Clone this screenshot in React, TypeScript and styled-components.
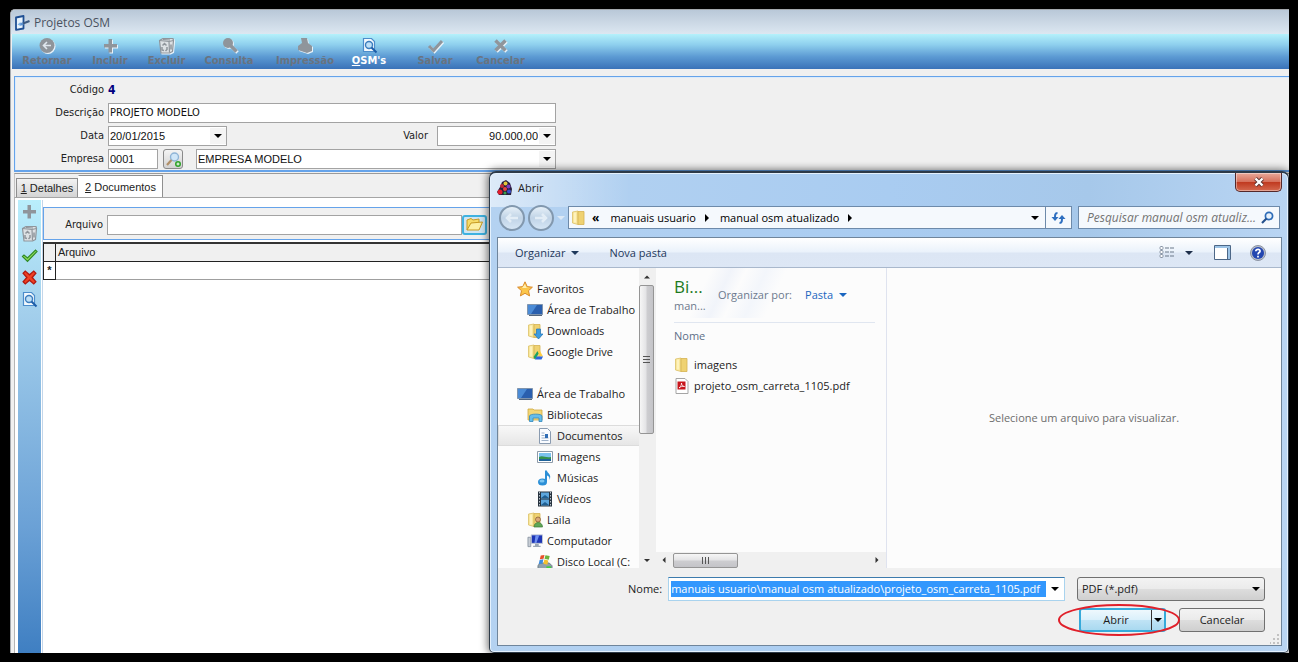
import React, { useEffect, useRef } from "react";
import styled, { createGlobalStyle } from "styled-components";

const GlobalStyle = createGlobalStyle`
  * { box-sizing: border-box; }
  body { margin: 0; background: #000; }
  button, input, select { font: inherit; color: inherit; margin: 0; }
  ul { list-style: none; margin: 0; padding: 0; }
  svg { display: block; flex: none; }
`;

const tahoma = `"DejaVu Sans Condensed", Tahoma, "DejaVu Sans", sans-serif`;
const msSans = `"Liberation Sans", Arial, sans-serif`;
const segoe = `"Open Sans", "Segoe UI", sans-serif`;

/* ---------- main window ---------- */

const Desktop = styled.div`
  position: relative;
  min-height: 100vh;
  display: flex;
  padding: 9px 9px 9px 10px;
  background: #000;
`;

const MainWindow = styled.main`
  flex: 1;
  min-width: 0;
  display: flex;
  flex-direction: column;
  background: #f0f0f0;
  border: 1px solid #a5a9ae;
  border-right: 0;
  border-bottom: 0;
  border-radius: 5px 0 0 0;
  overflow: hidden;
  font: 11px/14px ${tahoma};
  color: #222;
`;

const TitleBar = styled.header`
  display: flex;
  align-items: center;
  gap: 4px;
  height: 24px;
  padding: 1px 3px 0;
  background: linear-gradient(#b9c8d8, #dce7f1);
  font: 12px/16px ${segoe};
  color: #4a5260;
`;

const Toolbar = styled.nav`
  display: flex;
  height: 35px;
  margin-left: 1px;
  padding: 3px 0 0 2px;
  background: linear-gradient(#b4f1fb 0%, #8fd0ee 30%, #5c9ad3 65%, #3a72b8 100%);
`;

const ToolButton = styled.button<{ $w: number; $active?: boolean }>`
  display: flex;
  flex-direction: column;
  align-items: center;
  width: ${(p) => p.$w}px;
  padding: 0;
  border: 0;
  background: none;
  font: bold 11px/14px ${tahoma};
  color: ${(p) => (p.$active ? "#fff" : "#69737f")};
  white-space: nowrap;
  svg { filter: ${(p) => (p.$active ? "none" : "drop-shadow(1px 1px 0 #e8f2fa)")}; }
`;

const FormPanel = styled.form`
  display: flex;
  flex-direction: column;
  gap: 3px;
  margin: 7px 0 0 3px;
  padding: 3px 0 1px;
  border: 1px solid #65a3ea;
  border-right: 0;
  border-bottom-width: 2px;
  box-shadow: inset 1px 1px 0 #dcebfb;
`;

const FormRow = styled.div`
  display: flex;
  align-items: center;
  height: 20px;
`;

const FieldLabel = styled.label<{ $w: number; $gap?: number }>`
  width: ${(p) => p.$w}px;
  margin-right: ${(p) => p.$gap ?? 4}px;
  text-align: right;
`;

const Code = styled.output`
  font-size: 12px;
  font-weight: bold;
  color: #000080;
`;

const Field = styled.div<{ $w: number; $left?: number; $font?: string }>`
  display: flex;
  align-items: center;
  width: ${(p) => p.$w}px;
  height: 20px;
  margin-left: ${(p) => p.$left ?? 0}px;
  border: 1px solid #a3a3a3;
  background: #fff;
  font: 11px/16px ${(p) => p.$font ?? msSans};
  color: #111;
`;

const FieldInput = styled.input<{ $right?: boolean }>`
  flex: 1;
  min-width: 0;
  height: 16px;
  padding: 0 1px;
  border: 0;
  outline: 0;
  background: transparent;
  text-align: ${(p) => (p.$right ? "right" : "left")};
`;

const FieldSelect = styled.select`
  flex: 1;
  min-width: 0;
  width: 0;
  height: 16px;
  padding: 0 1px;
  border: 0;
  outline: 0;
  appearance: none;
  background: transparent;
`;

const ArrowButton = styled.button`
  display: flex;
  align-items: center;
  justify-content: center;
  width: 16px;
  height: 16px;
  padding: 0;
  border: 0;
  background: #f4f4f4;
`;

const LookupButton = styled.button`
  display: flex;
  align-items: center;
  justify-content: center;
  width: 20px;
  height: 20px;
  margin-left: 5px;
  padding: 0;
  border: 1px solid #8a8a8a;
  border-radius: 3px;
  background: linear-gradient(#f4f4f4, #d2d2d2);
`;

const Tabs = styled.div`
  display: flex;
  align-items: flex-end;
  height: 24px;
  margin: 1px 0 0 3px;
  padding-left: 1px;
  border-top: 1px solid #9a9a9a;
  border-left: 1px solid #c4c4c4;
  font: 11px/14px ${msSans};
`;

const Tab = styled.button<{ $w: number; $selected?: boolean }>`
  width: ${(p) => p.$w}px;
  height: ${(p) => (p.$selected ? 22 : 19)}px;
  padding: 0;
  border: 1px solid #8f8f8f;
  border-left-color: ${(p) => (p.$selected ? "#fff" : "#8f8f8f")};
  border-bottom: 0;
  background: ${(p) => (p.$selected ? "#fff" : "linear-gradient(#f2f2f2, #d4d4d4)")};
  white-space: nowrap;
`;

const TabPage = styled.section`
  flex: 1;
  display: flex;
  margin-left: 3px;
  padding: 2px 0 0 3px;
  border-top: 1px solid #a5a5a5;
  border-left: 1px solid #b5b5b5;
  background: #fff;
`;

const SideTools = styled.nav`
  display: flex;
  flex-direction: column;
  align-items: center;
  gap: 5px;
  width: 23px;
  padding-top: 3px;
  background: linear-gradient(#b9eefc 0%, #a3cfec 25%, #6ba1d6 72%, #3f7fc2 100%);
`;

const SideButton = styled.button`
  display: flex;
  padding: 0;
  border: 0;
  background: none;
`;

const Documents = styled.div`
  flex: 1;
  min-width: 0;
  margin-left: 1px;
  padding-top: 7px;
  border-left: 1px solid #c3d6ea;
`;

const FilePanel = styled.div`
  display: flex;
  align-items: center;
  height: 33px;
  padding-top: 2px;
  border: 1px solid #65a3ea;
  border-right: 0;
  background: #f0f0f0;
`;

const FolderButton = styled.button`
  display: flex;
  align-items: center;
  justify-content: center;
  width: 25px;
  height: 20px;
  padding: 0;
  border: 2px solid #3fb2e0;
  border-radius: 3px;
  background: #cfe6f3;
`;

const Grid = styled.table`
  width: 100%;
  margin-top: 2px;
  border-collapse: collapse;
  border-top: 2px solid #333;
  font: 11px/14px ${msSans};
  tr { height: 18px; }
  th { border: 1px solid #222; background: #f0f0f0; font-weight: normal; text-align: left; padding: 0 2px; }
  td { border-bottom: 1px solid #9f9f9f; padding: 0 2px; }
  th:first-child, td:first-child { width: 12px; padding: 0; border: 1px solid #222; text-align: center; font-weight: bold; }
`;

/* ---------- file dialog ---------- */

const Dialog = styled.section`
  position: absolute;
  top: 171px;
  left: 489px;
  right: 9px;
  padding: 0 6px 6px 7px;
  border: 1px solid #2d3a48;
  border-top-width: 2px;
  border-radius: 7px 7px 5px 5px;
  background:
    linear-gradient(90deg, rgba(255,255,255,0.55), rgba(255,255,255,0) 140px) no-repeat 0 0 / 100% 34px,
    linear-gradient(90deg, #b4d2f1, #a9ccf1 50%, #a6c8ea 75%, #b9d5f3);
  box-shadow: inset 0 0 0 1px #e4f1fd, 0 0 8px 1px rgba(0,0,0,0.6);
  font: 11px/16px ${segoe};
  color: #1c1c1c;
`;

const DialogTitle = styled.header`
  display: flex;
  align-items: center;
  gap: 5px;
  height: 29px;
`;

const CloseButton = styled.button`
  align-self: flex-start;
  display: flex;
  align-items: center;
  justify-content: center;
  width: 47px;
  height: 19px;
  margin-left: auto;
  padding: 0;
  border: 1px solid #54282a;
  border-top: 0;
  border-radius: 0 0 5px 5px;
  background: linear-gradient(#e9a99a 0%, #d6715c 48%, #c03a20 52%, #d4694f 100%);
  box-shadow: inset 0 0 0 1px rgba(255,255,255,0.4);
`;

const AddressRow = styled.div`
  display: flex;
  align-items: center;
  height: 35px;
  padding: 0 2px 4px;
`;

const NavButtons = styled.div`
  display: flex;
  align-items: center;
  width: 69px;
  gap: 3px;
`;

const NavButton = styled.button`
  display: flex;
  align-items: center;
  justify-content: center;
  width: 26px;
  height: 26px;
  padding: 0;
  border: 2px solid #8298ae;
  border-radius: 50%;
  background: linear-gradient(#e6f0f8, #c0d3e6 50%, #d6e6f5);
`;

const AddressBar = styled.div`
  flex: 1;
  display: flex;
  align-items: center;
  height: 23px;
  padding-left: 2px;
  border: 1px solid #6d8aaa;
  background: #f5f9fd;
  color: #000;
`;

const Crumb = styled.button`
  padding: 0;
  border: 0;
  background: none;
  margin: 0 9px 0 11px;
  white-space: nowrap;
`;

const CrumbOverflow = styled(Crumb)`
  margin: 0 0 0 5px;
  font-size: 12px;
  font-weight: bold;
`;

const Spacer = styled.span`
  flex: 1;
`;

const RefreshButton = styled.button`
  display: flex;
  align-items: center;
  justify-content: center;
  width: 26px;
  height: 21px;
  padding: 0;
  border: 0;
  border-left: 1px solid #6d8aaa;
  background: none;
`;

const PlainButton = styled.button<{ $w?: number }>`
  display: flex;
  align-items: center;
  justify-content: center;
  gap: 6px;
  width: ${(p) => (p.$w ? p.$w + "px" : "auto")};
  padding: 0;
  border: 0;
  background: none;
  white-space: nowrap;
`;

const SearchBox = styled.div`
  display: flex;
  align-items: center;
  width: 202px;
  height: 23px;
  margin-left: 6px;
  padding: 0 5px 0 8px;
  border: 1px solid #6d8aaa;
  background: #f5f9fd;
`;

const SearchInput = styled.input`
  flex: 1;
  min-width: 0;
  padding: 0;
  border: 0;
  outline: 0;
  background: none;
  font-size: 12px;
  font-style: italic;
  &::placeholder { color: #737373; opacity: 1; }
`;

const Client = styled.div`
  border: 1px solid #6f859b;
  background: #f0f0f0;
`;

const CommandBar = styled.div`
  display: flex;
  align-items: center;
  height: 30px;
  padding: 0 7px 0 17px;
  border-bottom: 1px solid #a9b8cc;
  background: linear-gradient(#fff 0%, #eaf2fb 48%, #dce6f4 52%, #dde7f5 100%);
  color: #1e395b;
`;

const Commands = styled.div`
  flex: 1;
  display: flex;
  gap: 30px;
`;

const CommandIcons = styled.div`
  display: flex;
  align-items: center;
`;

const Panes = styled.div`
  display: flex;
  height: 300px;
  background: #fcfcfc;
`;

const Tree = styled.ul`
  width: 141px;
  padding-top: 10px;
  overflow: hidden;
`;

const TreeItem = styled.li<{ $level: number; $selected?: boolean; $spaced?: boolean }>`
  display: flex;
  align-items: center;
  gap: 4px;
  height: 21px;
  margin-top: ${(p) => (p.$spaced ? 21 : 0)}px;
  padding-left: ${(p) => 18 + p.$level * 10}px;
  border: 1px solid ${(p) => (p.$selected ? "#dcdcdc" : "transparent")};
  border-right: 0;
  background: ${(p) => (p.$selected ? "linear-gradient(#f8f8f8, #e6e6e6)" : "none")};
  white-space: nowrap;
`;

const VScroll = styled.div`
  display: flex;
  flex-direction: column;
  align-items: center;
  width: 15px;
  padding: 7px 0 6px;
  background: #f0f0f0;
`;

const VThumb = styled.div`
  display: flex;
  align-items: center;
  justify-content: center;
  width: 15px;
  height: 149px;
  margin: 6px 0 auto;
  border: 1px solid #959595;
  border-radius: 2px;
  background: linear-gradient(90deg, #f6f6f6, #e4e4e6 45%, #cdcdd0 55%, #c4c4c8);
`;

const Files = styled.div`
  display: flex;
  flex-direction: column;
  width: 233px;
  border-left: 2px solid #f0f0f0;
  border-right: 1px solid #dfe3ef;
`;

const FilesBody = styled.div`
  flex: 1;
  padding: 8px 11px 0 18px;
  background: linear-gradient(115deg, #fcfcfc 22%, #f1f4fa 30%, #fcfcfc 36%, #f3f6fb 44%, #fcfcfc 52%) no-repeat 0 0 / 100% 50px;
`;

const LibraryHead = styled.div`
  display: flex;
  gap: 13px;
  height: 47px;
  border-bottom: 1px solid #e0e6f0;
  color: #6d7a8e;
`;

const LibraryName = styled.div`
  width: 31px;
  white-space: nowrap;
`;

const LibraryTitle = styled.h2`
  margin: 0;
  font: 17px/22px ${segoe};
  color: #1d7a1d;
`;

const Arrange = styled.div`
  display: flex;
  align-items: center;
  gap: 13px;
  height: 38px;
  white-space: nowrap;
`;

const PastaButton = styled(PlainButton)`
  color: #1a66c0;
`;

const ColumnHead = styled.div`
  height: 31px;
  padding: 5px 0;
  color: #5d6f88;
`;

const FileItem = styled.li`
  display: flex;
  align-items: center;
  gap: 4px;
  height: 21px;
  white-space: nowrap;
`;

const HScroll = styled.div`
  display: flex;
  align-items: center;
  height: 16px;
  padding: 0 7px 0 6px;
  background: #f0f0f0;
`;

const HThumb = styled.div`
  display: flex;
  align-items: center;
  justify-content: center;
  width: 65px;
  height: 15px;
  margin: 0 auto 0 7px;
  border: 1px solid #959595;
  border-radius: 2px;
  background: linear-gradient(#f6f6f6, #e4e4e6 45%, #cdcdd0 55%, #c4c4c8);
`;

const Preview = styled.div`
  flex: 1;
  display: flex;
  align-items: center;
  justify-content: center;
  color: #6d6d6d;
`;

const Footer = styled.footer`
  display: flex;
  flex-direction: column;
  gap: 7px;
  padding: 9px 16px 13px;
`;

const FooterRow = styled.div<{ $end?: boolean }>`
  display: flex;
  align-items: center;
  justify-content: ${(p) => (p.$end ? "flex-end" : "flex-start")};
  gap: ${(p) => (p.$end ? 13 : 12)}px;
`;

const NameField = styled.div`
  flex: 1;
  display: flex;
  align-items: center;
  justify-content: flex-end;
  gap: 6px;
  padding-left: 114px;
`;

const NameBox = styled.div`
  flex: 1;
  display: flex;
  align-items: center;
  height: 24px;
  padding-left: 2px;
  border: 1px solid #a9d3ee;
  border-top-color: #3d7bad;
  background: #fff;
`;

const NameInput = styled.input`
  flex: 1;
  min-width: 0;
  height: 16px;
  padding: 0;
  border: 0;
  outline: 0;
  background: #3297fd;
  color: #fff;
`;

const TypeBox = styled.div`
  display: flex;
  align-items: center;
  width: 188px;
  height: 24px;
  padding: 0 4px 0 3px;
  border: 1px solid #707070;
  border-radius: 3px;
  background: linear-gradient(#f3f3f3 0%, #ebebeb 48%, #dddddd 52%, #cfcfcf 100%);
`;

const OpenSplit = styled.div`
  position: relative;
  display: flex;
  width: 87px;
  height: 24px;
  border: 2px solid #36aada;
  border-radius: 3px;
  background: linear-gradient(#eef8fd 0%, #daf0fb 48%, #bfe3f5 52%, #a9d9f0 100%);
`;

const OpenButton = styled.button`
  flex: 1;
  padding: 0;
  border: 0;
  border-right: 1px solid #333;
  background: none;
`;

const HighlightRing = styled.svg`
  position: absolute;
  left: -24px;
  top: -7px;
  pointer-events: none;
`;

const CancelButton = styled.button`
  width: 86px;
  height: 24px;
  padding: 0;
  border: 1px solid #707070;
  border-radius: 3px;
  background: linear-gradient(#f3f3f3 0%, #ebebeb 48%, #dddddd 52%, #cfcfcf 100%);
`;

const Grip = styled.svg`
  position: absolute;
  right: 8px;
  bottom: 8px;
`;

/* ---------- icons ---------- */

const Down = ({ color = "#000", w = 8 }: { color?: string; w?: number }) => (
  <svg width={w} height={w / 2} viewBox="0 0 8 4"><path d="M0 0h8L4 4z" fill={color} /></svg>
);
const Up = () => <svg width="6" height="4" viewBox="0 0 8 4"><path d="M0 4h8L4 0z" fill="#333" /></svg>;
const Right = () => <svg width="4" height="8" viewBox="0 0 4 8"><path d="M0 0v8l4-4z" fill="#000" /></svg>;
const Left = () => <svg width="4" height="6" viewBox="0 0 4 8"><path d="M4 0v8L0 4z" fill="#333" /></svg>;

const AppIcon = () => (
  <svg width="16" height="16" viewBox="0 0 16 16">
    <path d="M2 2.500 9.500 1v12.500L2 14.800z" fill="#e8f3fc" stroke="#1f4f93" strokeWidth="1.800" strokeLinejoin="round" />
    <path d="m6 9.500 3.500-1" stroke="#5a8fce" strokeWidth="2.500" />
    <path d="M9 8.500 15.500 6" stroke="#3d5a80" strokeWidth="2.200" />
    <path d="m3.500 9.500 3-2.500v4z" fill="#7fb2e6" />
  </svg>
);

const g = "#8f959b";
const BackIcon = () => (
  <svg width="18" height="17" viewBox="0 0 18 17">
    <circle cx="9" cy="8.500" r="7.500" fill={g} />
    <path d="M13 8.500H5.500M9 5 5.500 8.500 9 12" stroke="#dfe7ee" strokeWidth="1.600" fill="none" />
  </svg>
);
const PlusIcon = () => (
  <svg width="17" height="17" viewBox="0 0 17 17"><path d="M6.500 2h3.500v5H15v3.500h-5v5H6.500v-5H2V7h4.500z" fill={g} /></svg>
);
const TrashIcon = () => (
  <svg width="17" height="17" viewBox="0 0 17 17">
    <path d="M1.500 3.500 5 1.500h10l.5 2-1 11-3 1.500H3z" fill="#dde1e4" stroke={g} strokeWidth="1.200" strokeLinejoin="round" />
    <path d="M1.500 3.500 11 4.500l4.500-1M11 4.500l.5 11M5 2.500l7 .5" stroke={g} strokeWidth="1.200" fill="none" />
    <path d="M4.500 8.500 6.500 6.500l2 2M4 10v3l2 .5M9 10v2.500L7.500 14M13 7.500v5" stroke={g} strokeWidth="1.500" fill="none" />
  </svg>
);
const SearchGray = () => (
  <svg width="17" height="17" viewBox="0 0 17 17">
    <circle cx="7" cy="6" r="5" fill={g} /><path d="m10 9 5.500 5.500" stroke={g} strokeWidth="3.500" />
  </svg>
);
const PrintGray = () => (
  <svg width="18" height="17" viewBox="0 0 18 17">
    <path d="M5 1h6l1 5 4 3v5l-5 2-9-3V9l4-3z" fill={g} />
  </svg>
);
const CheckGray = () => (
  <svg width="17" height="17" viewBox="0 0 17 17"><path d="m2 9 4.500 4.500L15 4" stroke={g} strokeWidth="3" fill="none" /></svg>
);
const CrossGray = () => (
  <svg width="17" height="17" viewBox="0 0 17 17"><path d="m3.500 3.500 10 10m0-10-10 10" stroke={g} strokeWidth="3.500" /></svg>
);
const PageSearch = () => (
  <svg width="17" height="17" viewBox="0 0 17 17">
    <path d="M2.500 1.500h8l3 3v10h-11z" fill="#f2f8fd" stroke="#4c8dcb" strokeWidth="1.200" />
    <circle cx="8" cy="8" r="3.500" fill="#bfe0f7" stroke="#3c7dbd" strokeWidth="1.400" />
    <path d="m10.500 10.500 5 5" stroke="#1d5da8" strokeWidth="2" />
  </svg>
);
const CheckGreen = () => (
  <svg width="17" height="17" viewBox="0 0 17 17">
    <path d="m1.500 9.500 1.500-1.500 3.500 3 8-8 1.500 1.500-9.500 10z" fill="#8fdc5a" stroke="#2f8a27" strokeWidth="1.200" />
  </svg>
);
const CrossRed = () => (
  <svg width="17" height="17" viewBox="0 0 16 16">
    <path d="m2 4 2-2 4 3.500L12 2l2 2-3.500 4 3.500 4-2 2-4-3.500L4 14l-2-2 3.500-4z" fill="#f04023" stroke="#b01810" strokeWidth="1.200" />
  </svg>
);
const LookupIcon = () => (
  <svg width="17" height="17" viewBox="0 0 17 17">
    <circle cx="9.500" cy="6" r="4" fill="#cfe6f8" stroke="#8fb4d6" strokeWidth="1.400" />
    <path d="M6.500 9 2 14" stroke="#b08f68" strokeWidth="2.200" />
    <circle cx="13" cy="13" r="3" fill="#2fa32a" /><path d="M11.500 13h3M13 11.500v3" stroke="#fff" />
  </svg>
);
const OpenFolder = () => (
  <svg width="19" height="15" viewBox="0 0 19 15">
    <path d="M2 13V3l4-1.500 2 1.500 6-1v4" fill="#f6dc6a" stroke="#c79a22" />
    <path d="m2 13 4-7 11.500-1-3.500 8z" fill="#fdf0a4" stroke="#c79a22" />
  </svg>
);
const FlowerIcon = () => (
  <svg width="16" height="16" viewBox="0 0 16 16">
    <path d="M5 2 9 0l4 3 2 6-1 6H2l-2-3 3-5z" fill="#27203c" />
    <circle cx="8.500" cy="3.500" r="2" fill="#e4c93a" /><circle cx="5" cy="6" r="2" fill="#c22b38" />
    <circle cx="11.500" cy="6.500" r="2" fill="#7b3bc0" /><circle cx="8" cy="9" r="2" fill="#e84040" />
    <circle cx="3" cy="12" r="2.500" fill="#e01d2c" /><circle cx="12" cy="11.500" r="2" fill="#3a4fd0" />
    <circle cx="8" cy="13" r="1.500" fill="#39a04a" />
  </svg>
);
const CloseX = () => (
  <svg width="12" height="10" viewBox="0 0 12 10">
    <path d="m2.500 1.500 7 7m0-7-7 7" stroke="#5b3230" strokeWidth="4" />
    <path d="m2.500 1.500 7 7m0-7-7 7" stroke="#fff" strokeWidth="2.400" />
  </svg>
);
const NavArrow = ({ flip }: { flip?: boolean }) => (
  <svg width="14" height="12" viewBox="0 0 14 12">
    <path d={flip ? "M1 6h11M8 2l4 4-4 4" : "M13 6H2M6 2 2 6l4 4"} stroke="#e3edf6" strokeWidth="2.500" fill="none" />
  </svg>
);
const RefreshIcon = () => (
  <svg width="15" height="14" viewBox="0 0 15 14">
    <path d="M6.500 2C4 2 4 4 4 7M8.500 12c2.500 0 2.500-2 2.500-5" stroke="#2e6fc0" strokeWidth="2" fill="none" />
    <path d="M.500 6h7L4 10zM7.500 8h7L11 4z" fill="#2e6fc0" />
  </svg>
);
const MagnifierIcon = () => (
  <svg width="13" height="13" viewBox="0 0 13 13">
    <circle cx="8" cy="5" r="3.600" fill="#e7f1fb" stroke="#2d6cb8" strokeWidth="1.700" />
    <path d="M5.500 7.500 1 12" stroke="#24508c" strokeWidth="2.200" />
  </svg>
);
const ViewIcon = () => (
  <svg width="16" height="13" viewBox="0 0 16 13">
    {[1, 5, 9].map((y) => (
      <g key={y}>
        <rect x="1" y={y - 0.5} width="3" height="3" rx="1" fill="#fff" stroke="#8894a5" />
        <path d={`M6 ${y + 1}h4M11 ${y + 1}h4`} stroke="#6b7889" />
      </g>
    ))}
  </svg>
);
const PaneIcon = () => (
  <svg width="17" height="15" viewBox="0 0 17 15">
    <path d="M.5.5h16v14H.5z" fill="#fff" stroke="#4c6787" /><path d="M1 1h15v2H1zM13.500 3H16v11h-2.500z" fill="#9cc3e6" />
    <path d="M13.500 3v11" stroke="#4c6787" />
  </svg>
);
const HelpIcon = () => (
  <svg width="16" height="16" viewBox="0 0 16 16">
    <circle cx="8" cy="8" r="7.500" fill="#b9bfcb" stroke="#8b93a3" /><circle cx="8" cy="8" r="6" fill="#2346b0" />
    <path d="M5.800 6.300C6 3.600 10.400 3.800 10 6.300 9.800 7.600 8 7.600 8 9.400M8 10.700v1.800" stroke="#fff" strokeWidth="1.700" fill="none" />
  </svg>
);
const StarIcon = () => (
  <svg width="16" height="16" viewBox="0 0 16 16">
    <path d="m8 .8 2.200 4.800 5.200.6-3.900 3.500 1.100 5.200L8 12.300l-4.600 2.600 1.100-5.200L.6 6.200l5.200-.6z" fill="#fbc64a" stroke="#d98a2b" />
    <path d="m8 3 1.400 3.500 3 .5H5z" fill="#fff0b0" />
  </svg>
);
const MonitorIcon = () => (
  <svg width="16" height="16" viewBox="0 0 16 16">
    <path d="M.5 2.500h15v10H.5z" fill="#2a5fae" stroke="#7f94ad" /><path d="M1 3h9L4 12H1z" fill="#4b8bd6" />
    <path d="M2 13.500h13" stroke="#53657c" />
  </svg>
);
const FolderBase = () => (
  <>
    <path d="M1.500 2 7 1v13.500L1.500 13z" fill="#f9e79c" stroke="#dcc067" strokeWidth=".8" />
    <path d="M7 1.500h6V14.500H7z" fill="#efd272" stroke="#d5b352" strokeWidth=".8" />
    <path d="M4 2.500v10" stroke="#fff6c8" strokeWidth="1.500" />
  </>
);
const FolderIcon = () => <svg width="16" height="16" viewBox="0 0 16 16"><FolderBase /></svg>;
const DownloadsIcon = () => (
  <svg width="16" height="16" viewBox="0 0 16 16"><FolderBase /><path d="M9.500 6h4v5H16l-4.500 5L7 11h2.500z" fill="#3d9be0" stroke="#2173b8" strokeWidth=".7" /></svg>
);
const DriveIcon = () => (
  <svg width="16" height="16" viewBox="0 0 16 16"><FolderBase />
    <path d="m10.500 7-4 6 1.500 2.500 4-6.500z" fill="#1da362" /><path d="M10.500 7H13l3 5.500h-3z" fill="#ffce44" /><path d="M9.500 12.500H16l-1.500 3H8z" fill="#2b66e0" />
  </svg>
);
const LibraryIcon = () => (
  <svg width="16" height="16" viewBox="0 0 16 16">
    <path d="M1 2h5l1 1h8v10H1z" fill="#f2d676" stroke="#cfa941" strokeWidth=".8" />
    <path d="M2.500 14.500V9C2.500 6.500 15 6.500 15 9v5.500h-3V11H6v3.500z" fill="#66bdea" stroke="#3188bd" strokeWidth=".8" />
  </svg>
);
const DocIcon = () => (
  <svg width="16" height="16" viewBox="0 0 16 16">
    <path d="M2.500.5h8l3 3v12h-11z" fill="#fafcff" stroke="#8a9bb0" /><path d="M4.500 5h3M4.500 7.500h3M4.500 10h7M4.500 12.500h7" stroke="#9fb2ca" />
    <path d="M8 6h3v4H8z" fill="#2f6db5" />
  </svg>
);
const ImageIcon = () => (
  <svg width="16" height="16" viewBox="0 0 16 16">
    <path d="M.5 2.500h15v11H.5z" fill="#fff" stroke="#8d9aa8" /><path d="M2 4h12v8H2z" fill="#7cc2ee" />
    <path d="M2 8c4-2 6 1 12 0v2H2z" fill="#35924d" /><path d="M2 10h12v2H2z" fill="#1e6299" />
  </svg>
);
const MusicIcon = () => (
  <svg width="16" height="16" viewBox="0 0 16 16">
    <ellipse cx="5.500" cy="12" rx="4.500" ry="3.500" fill="#2c8fd6" /><ellipse cx="5" cy="11" rx="2.500" ry="1.500" fill="#7cc6f2" />
    <path d="M8 12V.500h1.800C10.500 3.500 15 4.500 12.500 10c.3-3-1-4-2.500-4.500V12z" fill="#2c8fd6" />
  </svg>
);
const VideoIcon = () => (
  <svg width="16" height="16" viewBox="0 0 16 16">
    <path d="M1 .5h14v15H1z" fill="#27333f" /><path d="M4 1.500h8v6H4zM4 8.500h8v6H4z" fill="#5da6dc" />
    <path d="M2.500 1v14M13.500 1v14" stroke="#b9c3cc" strokeWidth="1" strokeDasharray="1.500 1.500" /><path d="m4 7 4-3 4 3M4 14l4-3 4 3" fill="#1f5f92" />
  </svg>
);
const UserIcon = () => (
  <svg width="16" height="16" viewBox="0 0 16 16"><FolderBase />
    <circle cx="11" cy="7.500" r="2.500" fill="#d9a878" stroke="#80552f" strokeWidth=".7" /><path d="M7 15c0-6 8.500-6 8.500 0z" fill="#5fa857" stroke="#3b7a38" strokeWidth=".7" />
  </svg>
);
const ComputerIcon = () => (
  <svg width="16" height="16" viewBox="0 0 17 16">
    <path d="M1 4h3v10H1z" fill="#c8ced6" stroke="#7f8b99" strokeWidth=".8" /><path d="M4.500 1.500h12v9h-12z" fill="#1d35b5" stroke="#c3cbd6" />
    <path d="M9 2h4l-3 8H8z" fill="#6f8ff0" /><path d="M8.500 11h4v2h2v1.500H6.500V13h2z" fill="#9aa6b5" />
  </svg>
);
const DiskIcon = () => (
  <svg width="16" height="16" viewBox="0 0 17 16">
    <path d="m1 12 2-3h10l3 3v3.500H1z" fill="#8fa0ac" stroke="#5f6e78" strokeWidth=".8" /><path d="M10 13.500h5" stroke="#3fd03f" strokeWidth="1.800" />
    <path d="m4 1 4-.5L7 4.500 3 5z" fill="#e8502c" /><path d="m9 .8 4.500.7-1 4-4.500-1z" fill="#6cb33e" />
    <path d="m2.800 6 4-.8-1 4.500-4 .5z" fill="#3a8be0" /><path d="m7.800 5.300 4.200 1-1 4.500-4.200-1z" fill="#f5c02c" />
  </svg>
);
const PdfIcon = () => (
  <svg width="16" height="16" viewBox="0 0 16 16">
    <path d="M2 .5h9l3 3v12H2z" fill="#fff" stroke="#a5a5a5" /><path d="M3.500 3.500h8v8h-8z" fill="#c8161d" />
    <path d="M5 10c2-1.500 2.500-3.500 2.500-5 0 2 1.500 3.500 3 3.500C8.500 8 7 8.500 5 10" stroke="#fff" strokeWidth=".8" fill="none" />
  </svg>
);

/* ---------- data ---------- */

type Tool = { label: React.ReactNode; icon: React.ReactNode; w: number; active?: boolean };
const tools: Tool[] = [
  { label: "Retornar", icon: <BackIcon />, w: 66 },
  { label: "Incluir", icon: <PlusIcon />, w: 60 },
  { label: "Excluir", icon: <TrashIcon />, w: 53 },
  { label: "Consulta", icon: <SearchGray />, w: 72 },
  { label: "Impressão", icon: <PrintGray />, w: 80 },
  { label: <><u>O</u>SM's</>, icon: <PageSearch />, w: 48, active: true },
  { label: "Salvar", icon: <CheckGray />, w: 84 },
  { label: "Cancelar", icon: <CrossGray />, w: 47 },
];

const places = [
  { label: "Favoritos", icon: <StarIcon />, level: 0 },
  { label: "Área de Trabalho", icon: <MonitorIcon />, level: 1 },
  { label: "Downloads", icon: <DownloadsIcon />, level: 1 },
  { label: "Google Drive", icon: <DriveIcon />, level: 1 },
  { label: "Área de Trabalho", icon: <MonitorIcon />, level: 0, spaced: true },
  { label: "Bibliotecas", icon: <LibraryIcon />, level: 1 },
  { label: "Documentos", icon: <DocIcon />, level: 2, selected: true },
  { label: "Imagens", icon: <ImageIcon />, level: 2 },
  { label: "Músicas", icon: <MusicIcon />, level: 2 },
  { label: "Vídeos", icon: <VideoIcon />, level: 2 },
  { label: "Laila", icon: <UserIcon />, level: 1 },
  { label: "Computador", icon: <ComputerIcon />, level: 1 },
  { label: "Disco Local (C:", icon: <DiskIcon />, level: 2 },
];

const FileDialog = () => {
  const nameRef = useRef<HTMLInputElement>(null);
  // Keep the end of a long path in view.
  useEffect(() => {
    if (nameRef.current) nameRef.current.scrollLeft = nameRef.current.scrollWidth;
  }, []);
  return (
    <Dialog role="dialog" aria-labelledby="dialog-title">
      <DialogTitle>
        <FlowerIcon />
        <span id="dialog-title">Abrir</span>
        <CloseButton aria-label="Fechar"><CloseX /></CloseButton>
      </DialogTitle>
      <AddressRow>
        <NavButtons>
          <NavButton aria-label="Voltar"><NavArrow /></NavButton>
          <NavButton aria-label="Avançar"><NavArrow flip /></NavButton>
          <Down color="#dce9f6" />
        </NavButtons>
        <AddressBar>
          <FolderIcon />
          <CrumbOverflow>«</CrumbOverflow>
          <Crumb>manuais usuario</Crumb>
          <Right />
          <Crumb>manual osm atualizado</Crumb>
          <Right />
          <Spacer />
          <PlainButton $w={20} aria-label="Locais anteriores"><Down /></PlainButton>
          <RefreshButton aria-label="Atualizar"><RefreshIcon /></RefreshButton>
        </AddressBar>
        <SearchBox>
          <SearchInput aria-label="Pesquisar" placeholder="Pesquisar manual osm atualiz..." />
          <MagnifierIcon />
        </SearchBox>
      </AddressRow>
      <Client>
        <CommandBar>
          <Commands>
            <PlainButton>Organizar <Down color="#1e395b" /></PlainButton>
            <PlainButton>Nova pasta</PlainButton>
          </Commands>
          <CommandIcons>
            <PlainButton $w={16} aria-label="Modo de exibição"><ViewIcon /></PlainButton>
            <PlainButton $w={28} aria-label="Mais opções"><Down color="#1e2f4b" /></PlainButton>
            <PlainButton $w={39} aria-label="Painel de visualização"><PaneIcon /></PlainButton>
            <PlainButton $w={32} aria-label="Ajuda"><HelpIcon /></PlainButton>
          </CommandIcons>
        </CommandBar>
        <Panes>
          <Tree>
            {places.map((p, i) => (
              <TreeItem key={i} $level={p.level} $selected={p.selected} $spaced={p.spaced}>{p.icon}{p.label}</TreeItem>
            ))}
          </Tree>
          <VScroll>
            <Up />
            <VThumb><svg width="7" height="8" viewBox="0 0 7 8"><path d="M0 .5h7M0 3.500h7M0 6.500h7" stroke="#555" /></svg></VThumb>
            <Down color="#333" w={6} />
          </VScroll>
          <Files>
            <FilesBody>
              <LibraryHead>
                <LibraryName><LibraryTitle>Bi...</LibraryTitle>man...</LibraryName>
                <Arrange>Organizar por: <PastaButton>Pasta <Down color="#1a66c0" /></PastaButton></Arrange>
              </LibraryHead>
              <ColumnHead>Nome</ColumnHead>
              <ul>
                <FileItem><FolderIcon />imagens</FileItem>
                <FileItem><PdfIcon />projeto_osm_carreta_1105.pdf</FileItem>
              </ul>
            </FilesBody>
            <HScroll>
              <Left />
              <HThumb><svg width="8" height="7" viewBox="0 0 8 7"><path d="M.5 0v7M3.500 0v7M6.500 0v7" stroke="#555" /></svg></HThumb>
              <svg width="4" height="6" viewBox="0 0 4 8"><path d="M0 0v8l4-4z" fill="#333" /></svg>
            </HScroll>
          </Files>
          <Preview>Selecione um arquivo para visualizar.</Preview>
        </Panes>
        <Footer>
          <FooterRow>
            <NameField>
              <label htmlFor="file-name">Nome:</label>
              <NameBox>
                <NameInput id="file-name" ref={nameRef} defaultValue="manuais usuario\manual osm atualizado\projeto_osm_carreta_1105.pdf" />
                <PlainButton $w={18} aria-label="Nomes recentes"><Down /></PlainButton>
              </NameBox>
            </NameField>
            <TypeBox>
              <FieldSelect aria-label="Tipo de arquivo"><option>PDF (*.pdf)</option></FieldSelect>
              <Down />
            </TypeBox>
          </FooterRow>
          <FooterRow $end>
            <OpenSplit>
              <OpenButton>Abrir</OpenButton>
              <PlainButton $w={12} aria-label="Opções de abertura"><Down /></PlainButton>
              <HighlightRing width="124" height="34" viewBox="0 0 124 34">
                <ellipse cx="62" cy="17" rx="60" ry="15" fill="none" stroke="#e0202a" strokeWidth="2" />
              </HighlightRing>
            </OpenSplit>
            <CancelButton>Cancelar</CancelButton>
          </FooterRow>
        </Footer>
      </Client>
      <Grip width="10" height="10" viewBox="0 0 10 10">
        <path d="M7 0h2v2H7zM7 4h2v2H7zM7 8h2v2H7zM3 4h2v2H3zM3 8h2v2H3zM0 8h1v2H0z" fill="#c2c2c2" />
      </Grip>
    </Dialog>
  );
};

export default function App() {
  return (
    <>
      <GlobalStyle />
      <Desktop>
        <MainWindow>
          <TitleBar><AppIcon />Projetos OSM</TitleBar>
          <Toolbar>
            {tools.map((t, i) => (
              <ToolButton key={i} $w={t.w} $active={t.active}>{t.icon}<span>{t.label}</span></ToolButton>
            ))}
          </Toolbar>
          <FormPanel>
            <FormRow>
              <FieldLabel $w={89} htmlFor="codigo">Código</FieldLabel>
              <Code id="codigo">4</Code>
            </FormRow>
            <FormRow>
              <FieldLabel $w={89} htmlFor="descricao">Descrição</FieldLabel>
              <Field $w={448} $font={tahoma}><FieldInput id="descricao" defaultValue="PROJETO MODELO" /></Field>
            </FormRow>
            <FormRow>
              <FieldLabel $w={89} htmlFor="data">Data</FieldLabel>
              <Field $w={119}>
                <FieldInput id="data" defaultValue="20/01/2015" />
                <ArrowButton type="button" aria-label="Abrir calendário"><Down /></ArrowButton>
              </Field>
              <FieldLabel $w={201} $gap={9} htmlFor="valor">Valor</FieldLabel>
              <Field $w={119}>
                <FieldInput id="valor" $right defaultValue="90.000,00" />
                <ArrowButton type="button" aria-label="Abrir calculadora"><Down /></ArrowButton>
              </Field>
            </FormRow>
            <FormRow>
              <FieldLabel $w={89} htmlFor="empresa">Empresa</FieldLabel>
              <Field $w={50}><FieldInput id="empresa" defaultValue="0001" /></Field>
              <LookupButton type="button" aria-label="Localizar empresa"><LookupIcon /></LookupButton>
              <Field $w={360} $left={13}>
                <FieldSelect aria-label="Nome da empresa"><option>EMPRESA MODELO</option></FieldSelect>
                <ArrowButton type="button" aria-label="Abrir lista"><Down /></ArrowButton>
              </Field>
            </FormRow>
          </FormPanel>
          <Tabs role="tablist">
            <Tab $w={62} role="tab"><u>1</u> Detalhes</Tab>
            <Tab $w={85} $selected role="tab" aria-selected><u>2</u> Documentos</Tab>
          </Tabs>
          <TabPage>
            <SideTools>
              <SideButton aria-label="Incluir"><PlusIcon /></SideButton>
              <SideButton aria-label="Excluir"><TrashIcon /></SideButton>
              <SideButton aria-label="Salvar"><CheckGreen /></SideButton>
              <SideButton aria-label="Cancelar"><CrossRed /></SideButton>
              <SideButton aria-label="Visualizar"><PageSearch /></SideButton>
            </SideTools>
            <Documents>
              <FilePanel>
                <FieldLabel $w={59} htmlFor="arquivo">Arquivo</FieldLabel>
                <Field $w={355}><FieldInput id="arquivo" /></Field>
                <FolderButton aria-label="Procurar arquivo"><OpenFolder /></FolderButton>
              </FilePanel>
              <Grid>
                <thead><tr><th></th><th>Arquivo</th></tr></thead>
                <tbody><tr><td>*</td><td></td></tr></tbody>
              </Grid>
            </Documents>
          </TabPage>
        </MainWindow>
        <FileDialog />
      </Desktop>
    </>
  );
}
